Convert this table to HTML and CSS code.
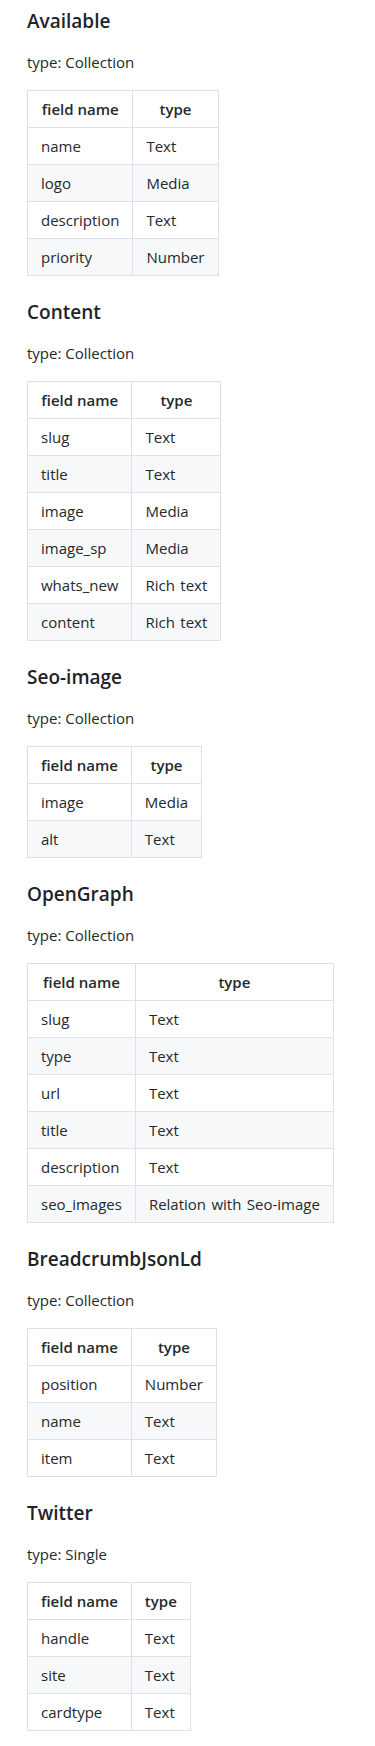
FILE: index.html
```html
<!DOCTYPE html>
<html lang="en">
<head>
<meta charset="utf-8">
<title>Models</title>
<link rel="stylesheet" href="styles.css">
</head>
<body>
<main class="doc">
  <section class="model">
    <h3>Available</h3>
    <p>type: Collection</p>
    <table>
      <thead><tr><th>field name</th><th>type</th></tr></thead>
      <tbody>
        <tr><td>name</td><td>Text</td></tr>
        <tr><td>logo</td><td>Media</td></tr>
        <tr><td>description</td><td>Text</td></tr>
        <tr><td>priority</td><td>Number</td></tr>
      </tbody>
    </table>
  </section>
  <section class="model">
    <h3>Content</h3>
    <p>type: Collection</p>
    <table>
      <thead><tr><th>field name</th><th>type</th></tr></thead>
      <tbody>
        <tr><td>slug</td><td>Text</td></tr>
        <tr><td>title</td><td>Text</td></tr>
        <tr><td>image</td><td>Media</td></tr>
        <tr><td>image_sp</td><td>Media</td></tr>
        <tr><td>whats_new</td><td>Rich text</td></tr>
        <tr><td>content</td><td>Rich text</td></tr>
      </tbody>
    </table>
  </section>
  <section class="model">
    <h3>Seo-image</h3>
    <p>type: Collection</p>
    <table>
      <thead><tr><th>field name</th><th>type</th></tr></thead>
      <tbody>
        <tr><td>image</td><td>Media</td></tr>
        <tr><td>alt</td><td>Text</td></tr>
      </tbody>
    </table>
  </section>
  <section class="model">
    <h3>OpenGraph</h3>
    <p>type: Collection</p>
    <table>
      <thead><tr><th>field name</th><th>type</th></tr></thead>
      <tbody>
        <tr><td>slug</td><td>Text</td></tr>
        <tr><td>type</td><td>Text</td></tr>
        <tr><td>url</td><td>Text</td></tr>
        <tr><td>title</td><td>Text</td></tr>
        <tr><td>description</td><td>Text</td></tr>
        <tr><td>seo_images</td><td>Relation with Seo-image</td></tr>
      </tbody>
    </table>
  </section>
  <section class="model">
    <h3>BreadcrumbJsonLd</h3>
    <p>type: Collection</p>
    <table>
      <thead><tr><th>field name</th><th>type</th></tr></thead>
      <tbody>
        <tr><td>position</td><td>Number</td></tr>
        <tr><td>name</td><td>Text</td></tr>
        <tr><td>item</td><td>Text</td></tr>
      </tbody>
    </table>
  </section>
  <section class="model">
    <h3>Twitter</h3>
    <p>type: Single</p>
    <table>
      <thead><tr><th>field name</th><th>type</th></tr></thead>
      <tbody>
        <tr><td>handle</td><td>Text</td></tr>
        <tr><td>site</td><td>Text</td></tr>
        <tr><td>cardtype</td><td>Text</td></tr>
      </tbody>
    </table>
  </section>
</main>
</body>
</html>
```
FILE: styles.css
```css
html, body {
  margin: 0;
  padding: 0;
  background: #ffffff;
}

.doc {
  padding: 9px 27px 0;
  font-family: "Open Sans", "Noto Sans", sans-serif;
  font-size: 15px;
  line-height: 24px;
  color: #24292e;
}

.model h3 {
  margin: 24px 0 16px;
  font-size: 19px;
  line-height: 25px;
  font-weight: 600;
  color: #1f2328;
}

.model:first-child h3 {
  margin-top: 0;
}

.model p {
  margin: 0 0 16px;
}

.model table {
  border-collapse: collapse;
  border-spacing: 0;
  margin: 0 0 16px;
}

.model th,
.model td {
  border: 1px solid #dfe2e5;
  padding: 6px 13px;
}

.model th {
  font-weight: 600;
  text-align: center;
}

.model td {
  text-align: left;
  word-spacing: 1.5px;
}

.model tbody tr:nth-child(2n) {
  background: #f6f8fa;
}
```
